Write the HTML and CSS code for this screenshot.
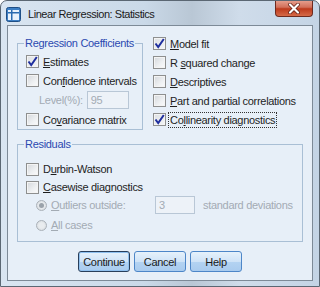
FILE: index.html
```html
<!DOCTYPE html>
<html>
<head>
    <meta charset="utf-8" />
    <title>Linear Regression: Statistics</title>
    <link rel="stylesheet" href="styles.css">
</head>
<body>
    <div class="window">
        <div class="titlebar">
            <svg class="title-icon" width="15" height="15" viewBox="0 0 15 15">
                <rect x="0.5" y="0.5" width="14" height="14" rx="2" fill="#3d7fc4" stroke="#1f4f86"/>
                <rect x="2" y="3" width="11" height="10" fill="#e8f2fc"/>
                <rect x="2" y="5" width="11" height="1.5" fill="#2a6bb0"/>
                <rect x="5" y="3" width="1.5" height="10" fill="#2a6bb0"/>
            </svg>
            <span class="title-text">Linear Regression: Statistics</span>
            <div class="close-btn">
                <svg width="14" height="11" viewBox="0 0 14 11">
                    <path d="M3 1.5 L11 9.5 M11 1.5 L3 9.5" stroke="#5a1a10" stroke-width="3.6" stroke-linecap="round"/>
                    <path d="M3 1.5 L11 9.5 M11 1.5 L3 9.5" stroke="#ffffff" stroke-width="2.2" stroke-linecap="round"/>
                </svg>
            </div>
        </div>

        <div class="client">
            <div class="top-section">
                <fieldset class="group group-coef">
                    <legend class="group-title">Regression Coefficients</legend>
                    <div class="row">
                        <span class="check checked"><svg width="11" height="11" viewBox="0 0 11 11"><path d="M1.5 5.5 L4.2 9 L9.8 1" fill="none" stroke="#1f2f9e" stroke-width="2"/></svg></span>
                        <span class="label"><u>E</u>stimates</span>
                    </div>
                    <div class="row">
                        <span class="check"></span>
                        <span class="label">Con<u>f</u>idence intervals</span>
                    </div>
                    <div class="row row-level">
                        <span class="label disabled">Level(%):</span>
                        <span class="textbox textbox-level">95</span>
                    </div>
                    <div class="row">
                        <span class="check"></span>
                        <span class="label">Co<u>v</u>ariance matrix</span>
                    </div>
                </fieldset>

                <div class="right-col">
                    <div class="row">
                        <span class="check checked"><svg width="11" height="11" viewBox="0 0 11 11"><path d="M1.5 5.5 L4.2 9 L9.8 1" fill="none" stroke="#1f2f9e" stroke-width="2"/></svg></span>
                        <span class="label"><u>M</u>odel fit</span>
                    </div>
                    <div class="row">
                        <span class="check"></span>
                        <span class="label">R <u>s</u>quared change</span>
                    </div>
                    <div class="row">
                        <span class="check"></span>
                        <span class="label"><u>D</u>escriptives</span>
                    </div>
                    <div class="row">
                        <span class="check"></span>
                        <span class="label"><u>P</u>art and partial correlations</span>
                    </div>
                    <div class="row">
                        <span class="check checked"><svg width="11" height="11" viewBox="0 0 11 11"><path d="M1.5 5.5 L4.2 9 L9.8 1" fill="none" stroke="#1f2f9e" stroke-width="2"/></svg></span>
                        <span class="label focused">Co<u>l</u>linearity diagnostics</span>
                    </div>
                </div>
            </div>

            <fieldset class="group group-resid">
                <legend class="group-title">Residuals</legend>
                <div class="row row-r">
                    <span class="check"></span>
                    <span class="label">D<u>u</u>rbin-Watson</span>
                </div>
                <div class="row row-r">
                    <span class="check"></span>
                    <span class="label"><u>C</u>asewise diagnostics</span>
                </div>
                <div class="row row-r row-indent">
                    <span class="radio selected"></span>
                    <span class="label disabled label-outliers"><u>O</u>utliers outside:</span>
                    <span class="textbox textbox-sd">3</span>
                    <span class="label disabled">standard deviations</span>
                </div>
                <div class="row row-r row-indent row-all">
                    <span class="radio"></span>
                    <span class="label disabled"><u>A</u>ll cases</span>
                </div>
            </fieldset>

            <div class="buttons">
                <button class="btn btn-default">Continue</button>
                <button class="btn">Cancel</button>
                <button class="btn">Help</button>
            </div>
        </div>
    </div>
</body>
</html>
```

FILE: styles.css
```css
body {
    margin: 0;
    padding: 0;
    background-color: #FFFFFF;
    font-family: "Liberation Sans", Arial, sans-serif;
}

.window {
    width: 320px;
    height: 287px;
    box-sizing: border-box;
    border: 1px solid #5b6773;
    border-radius: 7px 7px 0 0;
    background: linear-gradient(to right, #d9e5f1 0%, #cad9e8 45%, #b9c7d5 60%, #cfdcea 75%, #c4d4e5 100%);
    display: flex;
    flex-direction: column;
    overflow: hidden;
}

.titlebar {
    height: 25px;
    display: flex;
    align-items: center;
    padding-left: 5px;
    position: relative;
}

.title-icon {
    margin-right: 7px;
    margin-top: 2px;
}

.title-text {
    font-size: 11px;
    letter-spacing: -0.45px;
    color: #1a1a1a;
    margin-top: 1px;
}

.close-btn {
    position: absolute;
    right: 6px;
    top: -1px;
    width: 38px;
    height: 17px;
    box-sizing: border-box;
    border: 1px solid #6e2a1e;
    border-top: none;
    border-radius: 0 0 4px 4px;
    background: linear-gradient(to bottom, #e8a493 0%, #d2705a 45%, #bd3a1c 55%, #d56a48 100%);
    display: flex;
    align-items: center;
    justify-content: center;
}

.client {
    flex: 1;
    margin: 0 6px 5px 6px;
    border: 1px solid #7d8a97;
    background-color: #e7eff8;
    padding: 8px 9px 8px 9px;
    font-size: 11px;
    letter-spacing: -0.3px;
    color: #1e1e1e;
}

.top-section {
    display: flex;
    gap: 10px;
}

.group {
    margin: 0;
    min-width: 0;
    border: 1px solid #a9bfd5;
    padding: 0 0 0 8px;
}

.group-title {
    color: #2b49b0;
    font-size: 11px;
    line-height: 13px;
    padding: 0 1px;
    margin-left: -2px;
}

.group-coef {
    width: 126px;
    box-sizing: border-box;
    margin-top: 3px;
    padding-top: 2px;
}

.row {
    height: 19px;
    display: flex;
    align-items: center;
    white-space: nowrap;
}

.row-level {
    height: 20px;
    padding-left: 13px;
}

.right-col {
    display: flex;
    flex-direction: column;
}

.check {
    width: 13px;
    height: 13px;
    box-sizing: border-box;
    border: 1px solid #8e8f8f;
    background: linear-gradient(135deg, #d4d7db 0%, #eef0f2 60%, #fbfbfb 100%);
    box-shadow: inset 0 0 0 1px #f4f4f4;
    margin-right: 4px;
    display: flex;
    align-items: center;
    justify-content: center;
    flex-shrink: 0;
}

.check.checked {
    background: linear-gradient(135deg, #dde0e4 0%, #f4f5f6 100%);
}

.label u {
    text-decoration-thickness: 1px;
    text-underline-offset: 1px;
}

.disabled {
    color: #a3abb4;
}

.focused {
    outline: 1px dotted #333333;
    outline-offset: 0;
    padding: 0 1px;
    margin-left: -1px;
    line-height: 14px;
}

.textbox {
    height: 18px;
    box-sizing: border-box;
    border: 1px solid #b9c7d6;
    background-color: #edf2f8;
    color: #a3abb4;
    display: flex;
    align-items: center;
    padding-left: 3px;
}

.textbox-level {
    width: 42px;
    margin-left: 4px;
}

.group-resid {
    margin-top: 8px;
    padding-top: 9px;
    padding-bottom: 6px;
}

.row-r {
    height: 18px;
}

.row-indent {
    padding-left: 10px;
}

.row-all {
    height: 20px;
    margin-top: 1px;
}

.radio {
    width: 11px;
    height: 11px;
    box-sizing: border-box;
    border: 1px solid #aab1b8;
    border-radius: 50%;
    background: radial-gradient(circle, #e9ecef 40%, #cfd4d9 100%);
    margin-right: 4px;
    display: flex;
    align-items: center;
    justify-content: center;
    flex-shrink: 0;
}

.radio.selected::after {
    content: "";
    width: 5px;
    height: 5px;
    border-radius: 50%;
    background-color: #9aa2aa;
}

.label-outliers {
    width: 104px;
}

.textbox-sd {
    width: 40px;
    margin-right: 8px;
}

.buttons {
    display: flex;
    justify-content: center;
    gap: 4px;
    margin-top: 9px;
}

.btn {
    width: 52px;
    height: 21px;
    box-sizing: border-box;
    border: 1px solid #4d86c8;
    border-radius: 3px;
    background: linear-gradient(to bottom, #e6f1fb 0%, #cfe3f7 50%, #b4d3f2 51%, #a9cbee 100%);
    font-family: "Liberation Sans", Arial, sans-serif;
    font-size: 11px;
    letter-spacing: -0.3px;
    color: #1a1a1a;
    padding: 0;
}

.btn-default {
    border-color: #283f5c;
    box-shadow: inset 0 0 0 1px #8fc0ef;
}
```
